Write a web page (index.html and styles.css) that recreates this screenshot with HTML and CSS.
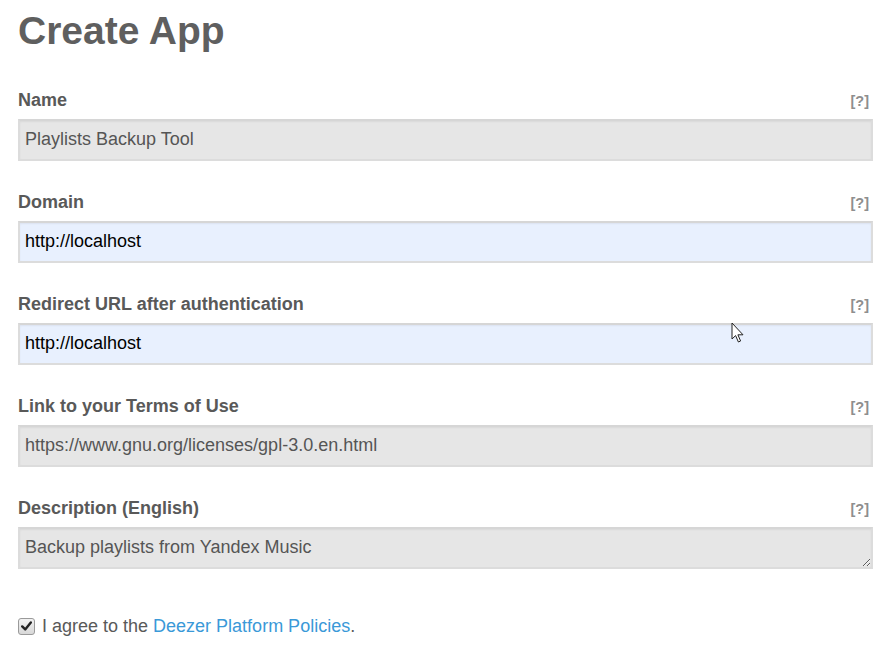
FILE: index.html
```html
<!DOCTYPE html>
<html lang="en">
<head>
<meta charset="utf-8">
<title>Create App</title>
<link rel="stylesheet" href="styles.css">
</head>
<body>
<div class="page">
  <h1 class="title">Create App</h1>
  <form class="form">
    <div class="group">
      <div class="label-row"><label class="label">Name</label><span class="help">[?]</span></div>
      <input class="field field-disabled" type="text" value="Playlists Backup Tool" readonly>
    </div>
    <div class="group">
      <div class="label-row"><label class="label">Domain</label><span class="help">[?]</span></div>
      <input class="field field-auto" type="text" value="http://localhost" readonly>
    </div>
    <div class="group">
      <div class="label-row"><label class="label">Redirect URL after authentication</label><span class="help">[?]</span></div>
      <input class="field field-auto" type="text" value="http://localhost" readonly>
    </div>
    <div class="group">
      <div class="label-row"><label class="label">Link to your Terms of Use</label><span class="help">[?]</span></div>
      <input class="field field-disabled" type="text" value="https://www.gnu.org/licenses/gpl-3.0.en.html" readonly>
    </div>
    <div class="group">
      <div class="label-row"><label class="label">Description (English)</label><span class="help">[?]</span></div>
      <textarea class="field field-disabled field-area" rows="1" readonly>Backup playlists from Yandex Music</textarea>
    </div>
    <div class="agree">
      <span class="check"><svg width="11" height="10" viewBox="0 0 11 10"><path d="M1.2 5.4 L4.2 8.4 L9.8 1.4" fill="none" stroke="#222" stroke-width="2.4" stroke-linecap="round" stroke-linejoin="round"/></svg></span>
      <span class="agree-text">I agree to the <a class="link" href="#">Deezer Platform Policies</a>.</span>
    </div>
  </form>
  <svg class="pointer" width="14" height="22" viewBox="0 0 14 22"><path d="M1 1 L1 17 L4.6 13.6 L7.4 20 L9.6 19 L6.9 12.8 L12 12.8 Z" fill="#fff" stroke="#222" stroke-width="1"/></svg>
</div>
</body>
</html>
```
FILE: styles.css
```css
* { box-sizing: border-box; }
html, body { margin: 0; padding: 0; background: #fff; }
body {
  font-family: "Liberation Sans", Arial, sans-serif;
  font-size: 18px;
  color: #595959;
}
.page {
  position: relative;
  padding: 9px 17px 0 18px;
}
.title {
  margin: 0;
  font-size: 39px;
  line-height: 44px;
  font-weight: bold;
  color: #5f5f5f;
}
.form { margin-top: 36px; }
.group { margin-bottom: 30px; }
.label-row {
  display: flex;
  justify-content: space-between;
  align-items: center;
  height: 22px;
  margin-bottom: 8px;
}
.label {
  font-weight: bold;
  line-height: 22px;
  color: #595959;
}
.help {
  font-size: 14.5px;
  font-weight: bold;
  color: #8e8e8e;
  padding-right: 4px;
  padding-top: 1px;
}
.field {
  display: block;
  width: 100%;
  height: 42px;
  margin: 0;
  padding: 0 5px 1px;
  font-family: "Liberation Sans", Arial, sans-serif;
  font-size: 18px;
  border: 2px solid #dcdcdc;
  border-top-color: #d6d6d6;
  border-radius: 0;
  box-shadow: inset 0 1px 2px rgba(0, 0, 0, 0.06);
  outline: none;
}
.field-disabled { background: #e6e6e6; color: #555; }
.field-auto { background: #e8f0fe; color: #000; }
.field-area {
  resize: vertical;
  padding-top: 7px;
  line-height: 22px;
  overflow: hidden;
}
.agree {
  display: flex;
  align-items: center;
  margin-top: 46px;
  height: 22px;
}
.check {
  display: flex;
  align-items: center;
  justify-content: center;
  width: 17px;
  height: 17px;
  border: 1px solid #9a9a9a;
  border-radius: 3px;
  background: linear-gradient(#f2f2f2, #d8d8d8);
  margin-right: 7px;
}
.agree-text { color: #595959; line-height: 22px; }
.link { color: #3a99d8; text-decoration: none; }
.pointer {
  position: absolute;
  left: 731px;
  top: 322px;
}
```
